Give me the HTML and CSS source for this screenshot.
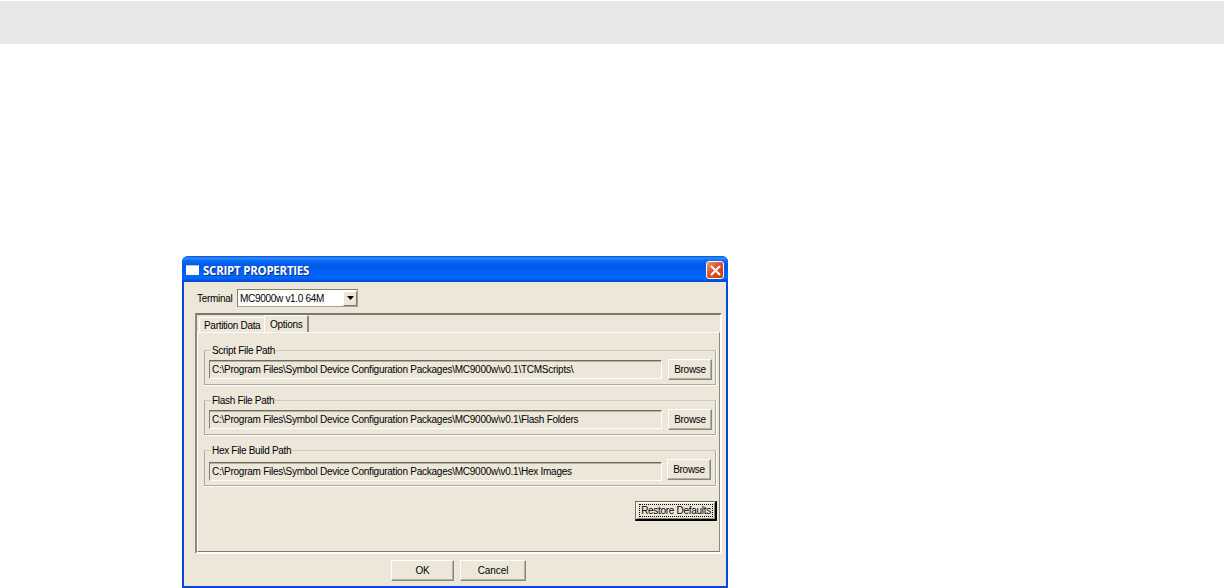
FILE: index.html
```html
<!DOCTYPE html>
<html lang="en">
<head>
  <meta charset="UTF-8">
  <title>Script Properties</title>
  <link rel="stylesheet" href="styles.css">
</head>
<body>
  <div class="page-header"></div>

  <div class="window">
    <div class="title-bar">
      <span class="window-icon"></span>
      <span class="title">SCRIPT PROPERTIES</span>
      <button class="close" aria-label="Close">
        <svg width="11" height="11" viewBox="0 0 11 11"><path d="M1 1L10 10M10 1L1 10" stroke="#fff" stroke-width="2.1" fill="none"/></svg>
      </button>
    </div>

    <div class="client">
      <div class="terminal-row">
        <span class="label">Terminal</span>
        <div class="combo">
          <span>MC9000w v1.0 64M</span>
          <button class="arrow" aria-label="Open">
            <svg width="7" height="4" viewBox="0 0 7 4"><path d="M0 0H7L3.5 4Z" fill="#000"/></svg>
          </button>
        </div>
      </div>

      <div class="tab-frame">
        <div class="tabs">
          <div class="tab">Partition Data</div>
          <div class="tab active">Options</div>
        </div>
        <div class="tab-page">
          <fieldset class="group">
            <legend>Script File Path</legend>
            <div class="path">C:\Program Files\Symbol Device Configuration Packages\MC9000w\v0.1\TCMScripts\</div>
            <button class="button browse">Browse</button>
          </fieldset>
          <fieldset class="group">
            <legend>Flash File Path</legend>
            <div class="path">C:\Program Files\Symbol Device Configuration Packages\MC9000w\v0.1\Flash Folders</div>
            <button class="button browse">Browse</button>
          </fieldset>
          <fieldset class="group hex">
            <legend>Hex File Build Path</legend>
            <div class="path">C:\Program Files\Symbol Device Configuration Packages\MC9000w\v0.1\Hex Images</div>
            <button class="button browse">Browse</button>
          </fieldset>
          <button class="restore"><span class="focus">Restore Defaults</span></button>
        </div>
      </div>

      <div class="actions">
        <button class="button ok">OK</button>
        <button class="button cancel">Cancel</button>
      </div>
    </div>
  </div>
</body>
</html>
```
FILE: styles.css
```css
* {
  box-sizing: border-box;
}

body {
  margin: 0;
  height: 588px;
  overflow: hidden;
  background: #fff;
  font-family: "Liberation Sans", Arial, sans-serif;
  font-size: 10px;
  letter-spacing: -0.3px;
  color: #000;
}

button {
  margin: 0;
  padding: 0;
  font: inherit;
  letter-spacing: inherit;
  color: inherit;
}

.page-header {
  height: 43px;
  margin-top: 1px;
  background: #e8e8e8;
}

.window {
  width: 546px;
  height: 332px;
  margin: 212px 0 0 182px;
  display: flex;
  flex-direction: column;
  border: 2px solid #0848d8;
  border-top: 0;
  border-radius: 6px 6px 0 0;
  background: #ede7da;
  white-space: nowrap;
}

/* Title bar */
.title-bar {
  height: 26px;
  margin: 0 -2px;
  padding: 2px 4px 0 4px;
  display: flex;
  align-items: center;
  border-radius: 6px 6px 0 0;
  background: linear-gradient(#0a50d0 0, #2a8cff 2px, #0a66f4 5px, #0058e6 10px, #0062fa 18px, #0068ff 22px, #0044cc 26px);
}

.window-icon {
  width: 13px;
  height: 10px;
  margin-bottom: 1px;
  background: #fff;
  border-top: 1px solid #a8c8f8;
}

.title {
  flex: 1;
  margin-left: 4px;
  font-family: "Open Sans", sans-serif;
  font-size: 11.5px;
  font-weight: bold;
  letter-spacing: -0.25px;
  color: #fff;
  text-shadow: 1px 1px #0a318c;
}

.close {
  width: 18px;
  height: 18px;
  display: flex;
  align-items: center;
  justify-content: center;
  border: 1px solid #fff;
  border-radius: 3px;
  background: linear-gradient(135deg, #ee9878, #e0512c 45%, #c83a10);
}

.client {
  flex: 1;
  padding: 7px 4px 0 11px;
}

/* Terminal selector */
.terminal-row {
  height: 18px;
  display: flex;
  align-items: center;
}

.label {
  width: 42px;
  padding-left: 2px;
}

.combo {
  width: 121px;
  height: 18px;
  padding-left: 2px;
  display: flex;
  align-items: center;
  justify-content: space-between;
  background: #fff;
  border: 1px solid;
  border-color: #848070 #a8a494 #a8a494 #848070;
}

.arrow {
  width: 14px;
  height: 15px;
  display: flex;
  align-items: center;
  justify-content: center;
  background: #ede7da;
  border: 1px solid;
  border-color: #fff #7c786c #7c786c #fff;
}

/* Tabs */
.tab-frame {
  width: 527px;
  height: 241px;
  margin-top: 6px;
  display: flex;
  flex-direction: column;
  border: 2px solid;
  border-color: #7c786c #fff #fff #8c887c;
}

.tabs {
  height: 17px;
  display: flex;
  align-items: flex-end;
  padding-left: 2px;
}

.tab {
  width: 65px;
  height: 15px;
  display: flex;
  align-items: center;
  padding-left: 4px;
  border-top: 1px solid #fff;
  border-left: 1px solid #fff;
  border-radius: 2px 0 0 0;
}

.tab.active {
  width: 45px;
  height: 18px;
  margin-bottom: -1px;
  padding: 0 0 0 5px;
  border-right: 2px solid #8c887c;
  border-radius: 2px 2px 0 0;
  background: #ede7da;
}

.tab-page {
  flex: 1;
  display: flex;
  flex-direction: column;
  padding: 11px 3px 0 6px;
  border: 1px solid;
  border-color: #fff #8c887c #7c786c #fff;
}

/* Path groups */
.group {
  width: 512px;
  height: 41px;
  min-width: 0;
  margin: 0 0 9px;
  padding: 4px 3px 0 4px;
  display: flex;
  justify-content: space-between;
  align-items: flex-start;
  border: 1px solid #aeaa9c;
  border-top-color: #cccabc;
  box-shadow: 0 1px #fff, 1px 0 #fff;
}

.group.hex {
  height: 42px;
  padding-right: 4px;
}

legend {
  height: 12px;
  margin: 0 0 0 2px;
  padding: 0 1px;
  line-height: 14px;
}

.path {
  width: 453px;
  height: 19px;
  padding-left: 2px;
  line-height: 18px;
  letter-spacing: -0.25px;
  border: 1px solid;
  border-color: #706c60 #fff #fff #807c70;
  box-shadow: inset 0 1px #b4b0a0;
}

.hex .path {
  margin-top: 2px;
}

.button {
  height: 21px;
  padding-bottom: 1px;
  border: 1px solid;
  border-color: #fff #8c887c #8c887c #fff;
  background: #ede7da;
  box-shadow: inset -1px -1px #b4b0a0;
}

.browse {
  width: 44px;
  margin-top: -1px;
}

.restore {
  width: 82px;
  height: 20px;
  align-self: flex-end;
  margin: 6px -1px 0 0;
  padding: 1px;
  border: 1px solid #000;
  border-width: 1px 2px 2px 1px;
  border-top-color: #706c60;
  border-left-color: #706c60;
  background: #ede7da;
  box-shadow: inset 1px 1px #fff, inset -1px -1px #8c887c;
}

.focus {
  height: 13px;
  margin: 0 1px 0 2px;
  display: flex;
  align-items: center;
  justify-content: center;
  border: 1px dotted #000;
}

/* Dialog buttons */
.actions {
  display: flex;
  gap: 6px;
  margin: 6px 0 0 196px;
  letter-spacing: -0.1px;
}

.ok {
  width: 63px;
}

.cancel {
  width: 66px;
}
```
